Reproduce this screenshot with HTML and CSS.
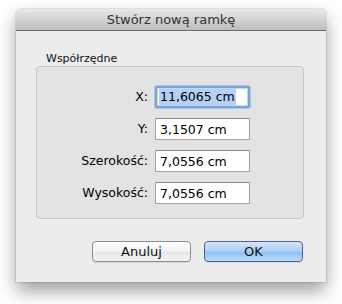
FILE: index.html
```html
<!DOCTYPE html>
<html>
  <head>
    <title>Stwórz nową ramkę</title>
    <link rel="stylesheet" href="styles.css">
  </head>
  <body>
    <div class="window">
      <div class="titlebar">Stwórz nową ramkę</div>
      <div class="content">
        <div class="group-label">Współrzędne</div>
        <div class="group">
          <label class="field-label" for="x">X:</label>
          <div class="field focused" id="x"><span class="selected">11,6065 cm</span></div>
          <label class="field-label" for="y">Y:</label>
          <input class="field" id="y" type="text" value="3,1507 cm">
          <label class="field-label" for="w">Szerokość:</label>
          <input class="field" id="w" type="text" value="7,0556 cm">
          <label class="field-label" for="h">Wysokość:</label>
          <input class="field" id="h" type="text" value="7,0556 cm">
        </div>
        <div class="buttons">
          <button class="btn" type="button">Anuluj</button>
          <button class="btn default" type="button">OK</button>
        </div>
      </div>
    </div>
  </body>
</html>
```

FILE: styles.css
```css
body, html {
  margin: 0;
  height: 100%;
}
body {
  background-color: #fff;
  font-family: 'DejaVu Sans', 'Noto Sans', sans-serif;
  color: #000;
}

.window {
  margin: 9px 0 0 16px;
  width: 310px;
  height: 273px;
  background-color: #ececec;
  border-radius: 4px 4px 0 0;
  box-shadow: 0 9px 18px rgba(0, 0, 0, 0.38), 0 0 0 1px rgba(0, 0, 0, 0.08);
  display: flex;
  flex-direction: column;
}

.titlebar {
  height: 21px;
  line-height: 21px;
  text-align: center;
  font-size: 13px;
  color: #333;
  background: linear-gradient(#e8e8e8, #bdbdbd);
  border-bottom: 1px solid #6b6b6b;
  border-radius: 4px 4px 0 0;
}

.content {
  padding: 21px 22px 0 20px;
  display: flex;
  flex-direction: column;
}

.group-label {
  font-size: 11px;
  line-height: 14px;
  padding-left: 10px;
  color: #111;
}

.group {
  height: 153px;
  box-sizing: border-box;
  border: 1px solid #c6c6c6;
  border-radius: 4px;
  background-color: #e3e3e3;
  padding: 19px 53px 0 0;
  display: grid;
  grid-template-columns: 1fr 95px;
  grid-auto-rows: 22px;
  column-gap: 7px;
  row-gap: 10px;
}

.field-label {
  font-size: 12.5px;
  text-align: right;
  line-height: 22px;
  color: #000;
}

.field {
  box-sizing: border-box;
  width: 95px;
  height: 22px;
  margin: 0;
  padding: 0 0 0 4px;
  font-family: inherit;
  font-size: 12.5px;
  color: #000;
  background-color: #fff;
  border: 1px solid #a5a5a5;
  border-top-color: #8e8e8e;
  border-radius: 0;
  outline: none;
}

.field.focused {
  border: 2px solid #7ba2d9;
  padding-left: 2px;
  line-height: 18px;
  box-shadow: 0 0 0 1px #a9c5ea, inset 0 0 0 1px #c4d7f1;
  border-radius: 2px;
}

.selected {
  display: inline-block;
  padding: 0 1px;
  line-height: 16px;
  background-color: #b4d0f4;
}

.buttons {
  display: flex;
  justify-content: flex-end;
  gap: 13px;
  margin-top: 22px;
  padding-right: 1px;
}

.btn {
  width: 99px;
  height: 21px;
  margin: 0;
  padding: 0;
  font-family: inherit;
  font-size: 13px;
  color: #111;
  border: 1px solid #8d8d8d;
  border-radius: 4px;
  background: linear-gradient(#ffffff, #f3f3f3 50%, #e6e6e6 51%, #f4f4f4);
  box-shadow: 0 1px 0 rgba(0, 0, 0, 0.08);
}

.btn.default {
  border-color: #5b5c8e;
  background: linear-gradient(#d5e7fb, #a6cdf5 50%, #8ebeef 51%, #b9dbfb);
}
```
